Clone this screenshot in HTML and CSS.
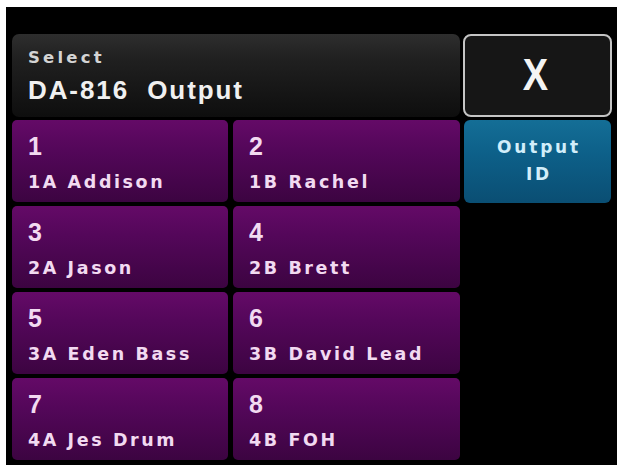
FILE: index.html
```html
<!DOCTYPE html>
<html>
<head>
<meta charset="utf-8">
<link rel="stylesheet" href="styles.css">
</head>
<body>
<div class="screen">
  <div class="left">
    <div class="header">
      <div class="sel">Select</div>
      <div class="title">DA-816&nbsp; Output</div>
    </div>
    <div class="grid">
      <div class="tile"><div class="num">1</div><div class="lbl">1A Addison</div></div>
      <div class="tile"><div class="num">2</div><div class="lbl">1B Rachel</div></div>
      <div class="tile"><div class="num">3</div><div class="lbl">2A Jason</div></div>
      <div class="tile"><div class="num">4</div><div class="lbl">2B Brett</div></div>
      <div class="tile"><div class="num">5</div><div class="lbl">3A Eden Bass</div></div>
      <div class="tile"><div class="num">6</div><div class="lbl">3B David Lead</div></div>
      <div class="tile"><div class="num">7</div><div class="lbl">4A Jes Drum</div></div>
      <div class="tile"><div class="num">8</div><div class="lbl">4B FOH</div></div>
    </div>
  </div>
  <div class="right">
    <div class="close"><span class="xg">X</span></div>
    <div class="outid">Output<br>ID</div>
  </div>
</div>
</body>
</html>
```
FILE: styles.css
```css
html, body {
  margin: 0;
  padding: 0;
  background: #ffffff;
}
body {
  width: 617px;
  height: 465px;
  overflow: hidden;
}
.screen {
  margin: 7px 0 0 6px;
  width: 611px;
  height: 458px;
  background: #000;
  box-sizing: border-box;
  padding: 27px 0 0 6px;
  display: flex;
  gap: 3px;
}
.left {
  width: 448px;
  display: flex;
  flex-direction: column;
  gap: 3px;
}
.header {
  height: 83px;
  border-radius: 7px;
  background: linear-gradient(#2e2e2e 0%, #202020 30%, #0e0e0e 100%);
  box-sizing: border-box;
  padding: 14px 0 0 16px;
}
.sel {
  font-family: "DejaVu Sans", sans-serif;
  font-weight: bold;
  font-size: 16.5px;
  letter-spacing: 3.2px;
  color: #d4d4d4;
  line-height: 20px;
}
.title {
  font-family: "Liberation Sans", sans-serif;
  font-weight: bold;
  font-size: 26px;
  letter-spacing: 1.9px;
  color: #f0f0f0;
  line-height: 30px;
  margin-top: 7px;
}
.grid {
  display: grid;
  grid-template-columns: 216px 227px;
  grid-auto-rows: 82px;
  column-gap: 5px;
  row-gap: 4px;
}
.tile {
  border-radius: 5px;
  background: linear-gradient(#640a67 0%, #54075a 35%, #3c0441 100%);
  box-sizing: border-box;
  padding: 12px 0 0 16px;
  color: #f2daf1;
}
.num {
  font-family: "Liberation Sans", sans-serif;
  font-weight: bold;
  font-size: 25px;
  line-height: 28px;
}
.lbl {
  font-family: "DejaVu Sans", sans-serif;
  font-weight: bold;
  font-size: 17.5px;
  letter-spacing: 2.6px;
  line-height: 20px;
  margin-top: 12px;
  white-space: nowrap;
}
.right {
  width: 149px;
  display: flex;
  flex-direction: column;
  gap: 3px;
}
.close {
  height: 83px;
  box-sizing: border-box;
  border: 2px solid #c4c4c4;
  border-radius: 8px;
  background: #161616;
  color: #f4f4f4;
  font-family: "Liberation Sans", sans-serif;
  font-weight: bold;
  font-size: 38px;
  display: flex;
  align-items: center;
  justify-content: center;
  padding-right: 4px;
}
.xg {
  display: inline-block;
  transform: scaleY(1.15);
}
.outid {
  margin-left: 1px;
  width: 147px;
  height: 83px;
  box-sizing: border-box;
  border-radius: 6px;
  background: linear-gradient(#146e96 0%, #0d6089 40%, #0a4e73 100%);
  color: #d2eefa;
  font-family: "DejaVu Sans", sans-serif;
  font-weight: bold;
  font-size: 17px;
  letter-spacing: 2.8px;
  line-height: 27px;
  text-align: center;
  padding: 14px 0 0 3px;
}
```
